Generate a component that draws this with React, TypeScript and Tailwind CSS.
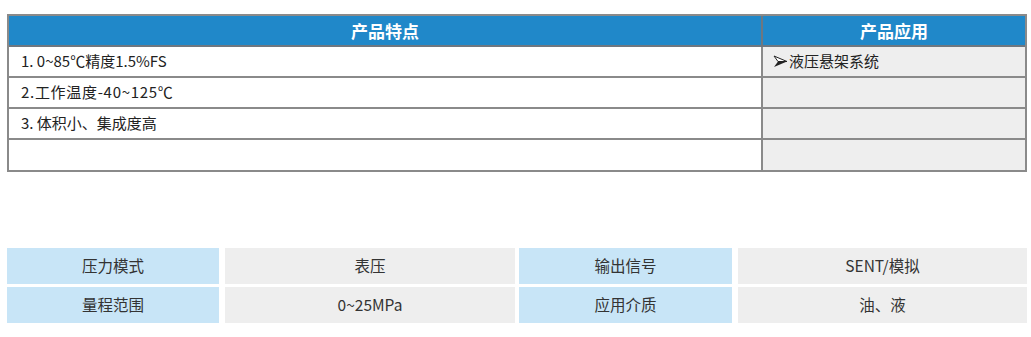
import React from "react";

const features = [
  { text: "1. 0~85℃精度1.5%FS", spacing: "" },
  { text: "2.工作温度-40~125℃", spacing: "tracking-[0.7px]" },
  { text: "3. 体积小、集成度高", spacing: "" },
  { text: "", spacing: "" },
];

const apps = ["液压悬架系统", "", "", ""];

const specs = [
  ["压力模式", "表压", "输出信号", "SENT/模拟"],
  ["量程范围", "0~25MPa", "应用介质", "油、液"],
];

// 3D-style arrowhead bullet
function Arrow() {
  return (
    <svg width="15" height="13" viewBox="0 0 15 13" className="mr-[1px]">
      <path d="M1 1 L14 6.5 L5 6.5 Z" fill="#fff" stroke="#222" strokeWidth="1" strokeLinejoin="round" />
      <path d="M5 6.5 L14 6.5 L1 12 Z" fill="#222" />
    </svg>
  );
}

export default function App() {
  return (
    <div
      className="w-[1031px] h-[337px] bg-white pl-[7px] pt-[14px]"
      style={{ fontFamily: '"Noto Sans CJK SC", "Noto Sans", sans-serif' }}
    >
      {/* feature / application table */}
      <div className="w-[1020px] border-2 border-[#8a8a8a]">
        <div className="flex h-[31px] bg-[#2088c9] text-white text-[17px] font-bold border-b-2 border-[#6e7780]">
          <div className="w-[754px] flex items-center justify-center border-r-2 border-[#6e7780]">产品特点</div>
          <div className="flex-1 flex items-center justify-center">产品应用</div>
        </div>
        {features.map((f, i) => (
          <div
            key={i}
            className={`flex text-[15px] text-[#222] ${i < features.length - 1 ? "h-[31px] border-b-2 border-[#8a8a8a]" : "h-[30px]"}`}
          >
            <div className={`w-[754px] flex items-center pl-[12px] border-r-2 border-[#8a8a8a] bg-white ${f.spacing}`}>
              {f.text}
            </div>
            <div className="flex-1 flex items-center pl-[10px] bg-[#eeeeee]">
              {apps[i] && (
                <>
                  <Arrow />
                  <span>{apps[i]}</span>
                </>
              )}
            </div>
          </div>
        ))}
      </div>

      {/* spec grid */}
      <div className="mt-[76px] flex flex-col gap-[3px] text-[15.5px] text-[#333]">
        {specs.map((row, r) => (
          <div key={r} className="flex h-[36px]">
            <div className="w-[212px] bg-[#c8e5f7] flex items-center justify-center">{row[0]}</div>
            <div className="ml-[6px] w-[290px] bg-[#eeeeee] flex items-center justify-center">{row[1]}</div>
            <div className="ml-[4px] w-[213px] bg-[#c8e5f7] flex items-center justify-center">{row[2]}</div>
            <div className="ml-[6px] w-[289px] bg-[#eeeeee] flex items-center justify-center">{row[3]}</div>
          </div>
        ))}
      </div>
    </div>
  );
}
